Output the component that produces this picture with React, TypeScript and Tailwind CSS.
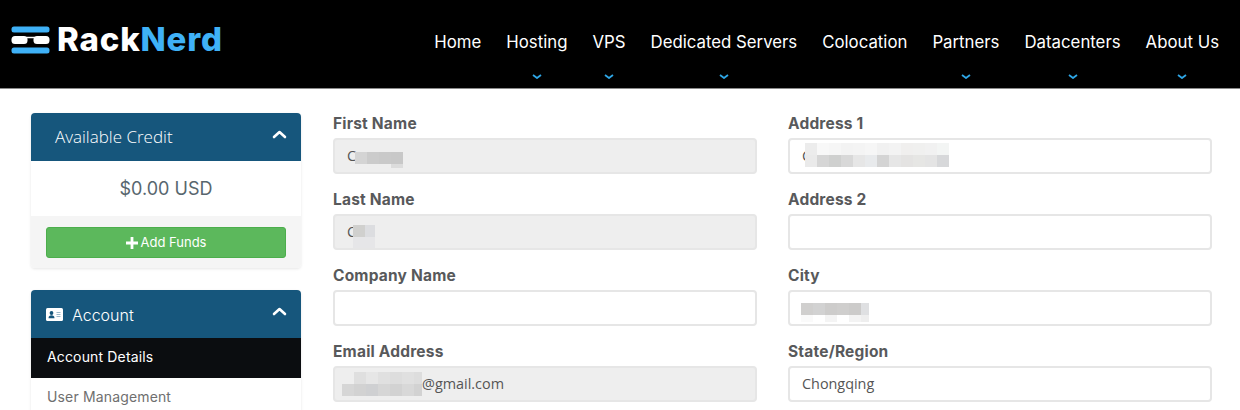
import React from "react";

const navItems = [
  { label: "Home", caret: false },
  { label: "Hosting", caret: true },
  { label: "VPS", caret: true },
  { label: "Dedicated Servers", caret: true },
  { label: "Colocation", caret: false },
  { label: "Partners", caret: true },
  { label: "Datacenters", caret: true },
  { label: "About Us", caret: true },
];

// pixelated bits that hide personal data, offsets are from the input's inner edge
type Blur = { left: number; top: number; width: number; height: number; rows: string[][] };

const firstName: Blur = {
  left: 20,
  top: 12,
  width: 48,
  height: 16,
  rows: [
    ["#d4d4d4", "#cbcbcb", "#c9c9c9", "#c8c8c8"],
    ["#eeeeee", "#eeeeee", "#eeeeee", "#dcdcdc"],
  ],
};
const lastName: Blur = {
  left: 18,
  top: 9,
  width: 22,
  height: 23,
  rows: [
    ["#d0d0ce", "#dcdde0"],
    ["#e6e6e8", "#e6e6e8"],
  ],
};
const email: Blur = {
  left: 7,
  top: 4,
  width: 80,
  height: 24,
  rows: [
    ["#eeeeee", "#dfdfdf", "#e6e6e6", "#e0e0e0", "#dddddd", "#e0e0e0", "#dddddd"],
    ["#d6d6d6", "#d2d2d2", "#cfd0d2", "#d6d6d6", "#d2d2d2", "#d8d8d8", "#d2d2d2"],
  ],
};
const address: Blur = {
  left: 15,
  top: 3,
  width: 144,
  height: 24,
  rows: [
    ["#ececec", "#f8f8f8", "#f6f6f6", "#f3f3f3", "#f4f4f4", "#f6f6f6", "#f1f1f1", "#f3f3f3", "#f0efee", "#f0f0ef", "#f1f1f1", "#f3f5f4"],
    ["#eaeaea", "#d6d6d6", "#cfd0cf", "#d8d8d8", "#e6e6e6", "#e8eaec", "#d4d4d4", "#e6e6e6", "#e4e3e2", "#e6e6e4", "#e4e4e4", "#d7d8da"],
  ],
};
const city: Blur = {
  left: 11,
  top: 11,
  width: 68,
  height: 19,
  rows: [
    ["#d0cfce", "#d2d2d2", "#cdcccb", "#cfcecd", "#cccbca", "#dfe0e2"],
    ["#fafafa", "#ffffff", "#f4f4f4", "#ffffff", "#f3f3f3", "#eeeeee"],
  ],
};

function Mosaic({ blur }: { blur: Blur }) {
  return (
    <div
      className="absolute overflow-hidden flex flex-col"
      style={{ left: blur.left, top: blur.top, width: blur.width, height: blur.height }}
    >
      {blur.rows.map((row, i) => (
        <div key={i} className="flex shrink-0">
          {row.map((c, j) => (
            <div key={j} className="w-3 h-3 shrink-0" style={{ backgroundColor: c }} />
          ))}
        </div>
      ))}
    </div>
  );
}

function Field({ label, value, disabled, blur, indent }: { label: string; value?: string; disabled?: boolean; blur?: Blur; indent?: boolean }) {
  return (
    <div className="h-[76px]">
      <label className="block h-[25px] pt-[1px] text-[15.5px] leading-[20px] font-bold tracking-[0.2px] text-[#58595b]">{label}</label>
      <div
        className={`relative h-9 rounded-[4px] border-2 border-[#e6e6e6] px-[12px] flex items-center font-['Open_Sans',sans-serif] text-[14.4px] text-[#555] ${
          disabled ? "bg-[#eeeeee]" : "bg-white"
        }`}
      >
        <span className={indent ? "ml-[75px]" : ""}>{value}</span>
        {blur && <Mosaic blur={blur} />}
      </div>
    </div>
  );
}

function ChevronUp() {
  return (
    <svg width="15" height="9" viewBox="0 0 15 9" fill="none">
      <path d="M2 7l5.5-5L13 7" stroke="#fff" strokeWidth="2.6" strokeLinecap="round" strokeLinejoin="round" />
    </svg>
  );
}

export default function App() {
  return (
    <div className="h-[410px] w-[1240px] overflow-hidden bg-white font-['Inter',sans-serif]">
      <header className="h-[89px] bg-black border-b border-[#8a8a8a] flex justify-between pl-[11px] pr-[21px]">
        <div className="flex items-center gap-[7px] h-[79px]">
          <svg width="39" height="28" viewBox="0 0 39 28">
            <rect x="0.5" y="0.5" width="38" height="6" rx="2.5" fill="#3fb1f7" />
            <rect x="0.5" y="21.5" width="38" height="6" rx="2.5" fill="#3fb1f7" />
            <rect x="0.5" y="10" width="16" height="8" rx="3.5" fill="#fff" />
            <rect x="22.5" y="10" width="16" height="8" rx="3.5" fill="#fff" />
            <path d="M15 11.5h9" stroke="#fff" strokeWidth="1.5" />
          </svg>
          <span className="text-[33px] leading-none font-extrabold tracking-[0.8px]">
            <span className="text-white">Rack</span>
            <span className="text-[#3fb1f7]">Nerd</span>
          </span>
        </div>
        <nav className="flex gap-[25px] pt-[31px]">
          {navItems.map((item) => (
            <div key={item.label} className="flex flex-col items-center">
              <span className="text-[16.8px] leading-[22px] text-white whitespace-nowrap">{item.label}</span>
              {item.caret && (
                <svg width="10" height="5" viewBox="0 0 10 5" fill="none" className="mt-[21px]">
                  <path d="M1 1l4 3 4-3" stroke="#2ea6e6" strokeWidth="1.8" />
                </svg>
              )}
            </div>
          ))}
        </nav>
      </header>

      <div className="flex gap-[32px] pl-[31px] pt-[24px]">
        <aside className="w-[270px] shrink-0">
          <div className="rounded-[4px] overflow-hidden shadow-[0_1px_3px_rgba(0,0,0,0.1)]">
            <div className="h-[48px] bg-[#16567c] flex items-center justify-between pl-[24px] pr-[14px]">
              <span className="text-[17px] font-['Open_Sans',sans-serif] font-light text-white">Available Credit</span>
              <span className="mb-[5px]"><ChevronUp /></span>
            </div>
            <div className="h-[55px] bg-white flex items-center justify-center text-[18px] text-[#58666e]">$0.00 USD</div>
            <div className="h-[52px] bg-[#f5f5f5] px-[15px] pt-[11px]">
              <button className="w-full h-[31px] rounded-[3px] bg-[#5cb85c] border border-[#4cae4c] text-white text-[13px] flex items-center justify-center gap-[3px]">
                <svg width="12" height="12" viewBox="0 0 12 12"><path d="M6 0v12M0 6h12" stroke="#fff" strokeWidth="2.8" /></svg>
                Add Funds
              </button>
            </div>
          </div>

          <div className="mt-[22px] rounded-t-[4px] overflow-hidden shadow-[0_1px_3px_rgba(0,0,0,0.1)]">
            <div className="h-[48px] bg-[#16567c] flex items-center justify-between pl-[15px] pr-[14px]">
              <span className="flex items-center gap-[9px] text-[16px] font-light text-white">
                <svg width="17" height="13" viewBox="0 0 17 13">
                  <rect width="17" height="13" rx="1.5" fill="#fff" />
                  <circle cx="5.5" cy="5" r="1.9" fill="#16567c" />
                  <path d="M2.5 10.2c0-2 1.3-2.9 3-2.9s3 .9 3 2.9z" fill="#16567c" />
                  <path d="M10.5 4.5h4M10.5 6.5h4M10.5 8.5h4" stroke="#9db9ca" strokeWidth="1" />
                </svg>
                <span className="mt-[2px]">Account</span>
              </span>
              <span className="mb-[5px]"><ChevronUp /></span>
            </div>
            <div className="h-[40px] bg-[#0b0d10] pl-[16px] pb-[3px] flex items-center text-[14px] tracking-[0.15px] text-white">Account Details</div>
            <div className="h-[40px] bg-white pl-[16px] pb-[3px] flex items-center text-[14px] tracking-[0.15px] text-[#6f6f6f]">User Management</div>
          </div>
        </aside>

        <main className="w-[879px] grid grid-cols-2 gap-x-[31px] content-start">
          <Field label="First Name" value="C" disabled blur={firstName} />
          <Field label="Address 1" value="C" blur={address} />
          <Field label="Last Name" value="C" disabled blur={lastName} />
          <Field label="Address 2" />
          <Field label="Company Name" />
          <Field label="City" blur={city} />
          <Field label="Email Address" value="@gmail.com" disabled blur={email} indent />
          <Field label="State/Region" value="Chongqing" />
        </main>
      </div>
    </div>
  );
}
